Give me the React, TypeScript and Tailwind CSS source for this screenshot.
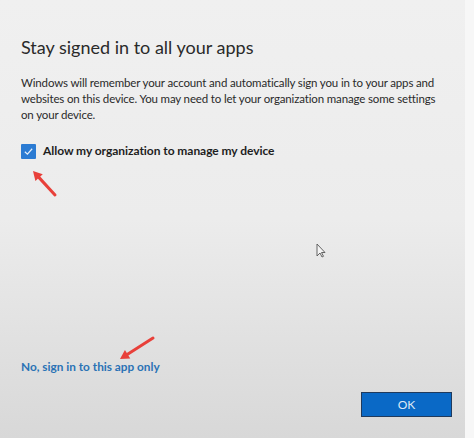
import React from "react";

function RedArrow({ x1, y1, x2, y2 }: { x1: number; y1: number; x2: number; y2: number }) {
  const ang = Math.atan2(y2 - y1, x2 - x1);
  const L = 9;
  const w = 5;
  const bx = x2 - L * Math.cos(ang);
  const by = y2 - L * Math.sin(ang);
  const px = -Math.sin(ang) * w;
  const py = Math.cos(ang) * w;
  return (
    <g>
      <line x1={x1} y1={y1} x2={bx} y2={by} stroke="#e8403a" strokeWidth={3} strokeLinecap="round" />
      <polygon points={`${x2},${y2} ${bx + px},${by + py} ${bx - px},${by - py}`} fill="#e8403a" />
    </g>
  );
}

export default function App() {
  return (
    <div
      className="relative w-[474px] h-[438px] overflow-hidden flex bg-[#efefef]"
      style={{ fontFamily: 'Lato, "Noto Sans", sans-serif' }}
    >
      <div className="w-[465px] h-full flex flex-col bg-gradient-to-b from-[#f0f0f0] via-[#ececec] to-[#d8d8d8] pl-[21px] pr-[13px]">
        <h1 className="mt-[34px] text-[18px] leading-[26px] font-normal text-[#2a2a2a]">
          Stay signed in to all your apps
        </h1>
        <p className="mt-[15px] text-[11.5px] leading-[16px] text-[#2a2a2a] tracking-[-0.15px] pr-[8px]">
          Windows will remember your account and automatically sign you in to your apps and websites on this device. You may need to let your organization manage some settings on your device.
        </p>
        <div className="mt-[19px] flex items-center gap-[7px]">
          <div className="w-[15px] h-[15px] bg-[#2b7bd3] flex items-center justify-center rounded-[1px]">
            <svg width="11" height="11" viewBox="0 0 12 12">
              <path d="M2 6.3 L4.8 9 L10 3" fill="none" stroke="#e6f0fb" strokeWidth="1.3" />
            </svg>
          </div>
          <span className="text-[12px] font-bold text-[#1e1e1e] tracking-[-0.05px]">
            Allow my organization to manage my device
          </span>
        </div>
        <div className="flex-1" />
        <a className="text-[11.8px] font-bold text-[#2a72b5] leading-[16px]">
          No, sign in to this app only
        </a>
        <div className="mt-[17px] mb-[21px] flex justify-end">
          <button className="w-[91px] h-[25px] bg-[#0a69c6] border border-[#203a5c] text-[#dde8f5] text-[12px] leading-[22px]">
            OK
          </button>
        </div>
      </div>
      <div className="w-[9px] h-full bg-[#f7f7f7]" />
      <svg className="absolute left-0 top-0 pointer-events-none" width="474" height="438">
        <RedArrow x1={55} y1={195} x2={33} y2={171} />
        <RedArrow x1={153} y1={338} x2={120} y2={359} />
        <path d="M317 244 L317 256 L320 253 L322 257 L323.5 256.3 L321.5 252.5 L325 252.5 Z" fill="#f4f4f4" stroke="#555" strokeWidth="0.9" />
      </svg>
    </div>
  );
}
